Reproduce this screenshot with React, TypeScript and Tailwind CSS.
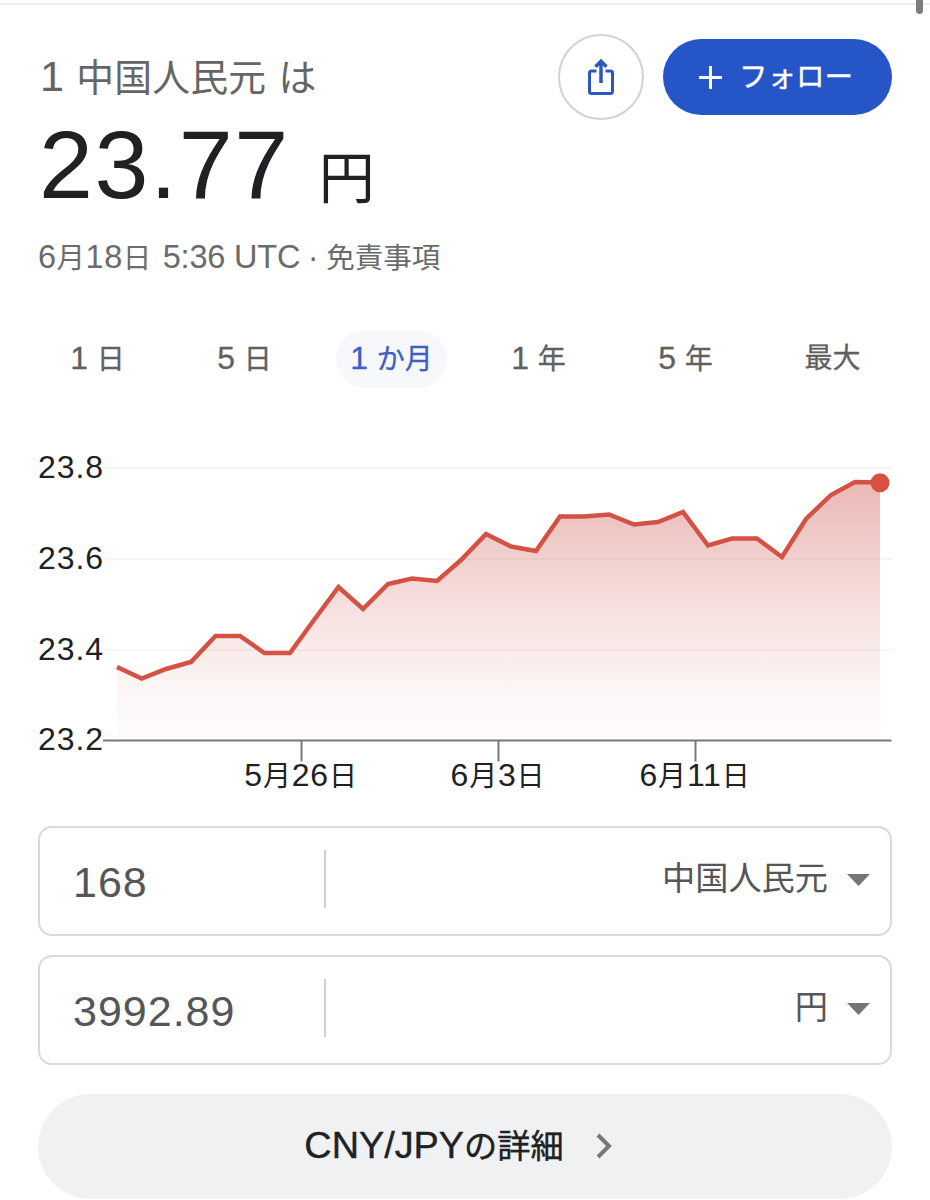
import React from 'react';

const RANGES = ['1 日', '5 日', '1 か月', '1 年', '5 年', '最大'];

const Y_LABELS = [
  { text: '23.8', y: 27.5 },
  { text: '23.6', y: 118.5 },
  { text: '23.4', y: 209.5 },
  { text: '23.2', y: 300 },
];

const X_LABELS = [
  { text: '5月26日', x: 263.5 },
  { text: '6月3日', x: 460.5 },
  { text: '6月11日', x: 657.5 },
];

const POINTS: [number, number][] = [
  [79, 227], [103.7, 238.5], [128, 229], [153, 222], [177.5, 196], [202, 196], [226.5, 213], [252, 213],
  [276, 180], [300.5, 147], [325, 169], [350, 144], [374, 138.5], [399, 141], [423, 120], [448, 94],
  [473, 106.5], [498, 111], [522, 76.5], [546, 76.5], [571, 74.5], [596, 84.5], [620, 82], [645, 72],
  [670, 105.5], [694, 98.5], [719, 98.5], [744, 117], [768, 79], [793, 55], [817, 42], [842, 42.5],
];

const LINE = POINTS.map(([x, y]) => `${x},${y}`).join(' ');

// Latin runs are set a little larger than the kanji and kana next to them
const Mixed: React.FC<{ text: string }> = ({ text }) => (
  <>
    {text.split(/([\x20-\x7e]+)/).filter(Boolean).map((part, i) => (
      <span key={i} className={/^[\x20-\x7e]/.test(part) ? 'text-[1.14em]' : ''}>{part}</span>
    ))}
  </>
);

const Chart: React.FC = () => (
  <svg viewBox="0 0 854 360" className="block h-[360px] w-[854px] overflow-visible">
    <defs>
      <linearGradient id="area" x1="0" y1="42" x2="0" y2="300" gradientUnits="userSpaceOnUse">
        <stop offset="0" stopColor="#c9443c" stopOpacity="0.38" />
        <stop offset="0.5" stopColor="#c9443c" stopOpacity="0.16" />
        <stop offset="0.8" stopColor="#c9443c" stopOpacity="0.05" />
        <stop offset="1" stopColor="#c9443c" stopOpacity="0.015" />
      </linearGradient>
    </defs>
    {Y_LABELS.slice(0, 3).map((label) => (
      <line key={label.text} x1="66" x2="854" y1={label.y + 0.5} y2={label.y + 0.5} stroke="#f6f6f6" strokeWidth="2" />
    ))}
    <polygon points={`79,300 ${LINE} 842,300`} fill="url(#area)" />
    <line x1="65" x2="853.5" y1="300.5" y2="300.5" stroke="#75797c" strokeWidth="2" />
    <polyline points={LINE} fill="none" stroke="#d35244" strokeWidth="4.5" />
    <circle cx="842" cy="42.7" r="9.5" fill="#d94f40" />
    {Y_LABELS.map((label) => (
      <text key={label.text} x="0" y={label.y + 10} fontSize="32" textLength="65" fill="#202124">{label.text}</text>
    ))}
    {X_LABELS.map((label) => (
      <g key={label.text}>
        <line x1={label.x} x2={label.x} y1="301" y2="321.5" stroke="#75797c" strokeWidth="2" />
        <text x={label.x - 0.5} y="345.5" fontSize="28" letterSpacing="0.8" textAnchor="middle" fill="#202124">
          {label.text.split(/(\d+)/).filter(Boolean).map((part, i) => (
            <tspan key={i} fontSize={/\d/.test(part) ? 32 : 28}>{part}</tspan>
          ))}
        </text>
      </g>
    ))}
  </svg>
);

const CurrencyField: React.FC<{ amount: string; currency: string }> = ({ amount, currency }) => (
  <div className="flex h-[110px] items-center rounded-[14px] border-2 border-[#d9dadd] pr-[20px] pl-[33px] text-[#555658]">
    <span className="w-[251px] pt-px text-[43px] leading-[48px] tracking-[1px]">{amount}</span>
    <div className="mb-[5px] h-[58px] w-[2px] bg-[#cfcfd1]"></div>
    <span className="mb-[5px] flex-grow text-right text-[33.2px] leading-[48px]">{currency}</span>
    <svg viewBox="0 0 23 12" className="mb-[2px] ml-[19px] h-[12px] w-[23px]">
      <path d="M0 0h23L11.5 12z" fill="#757575" />
    </svg>
  </div>
);

const App: React.FC = () => {
  return (
    <div className="relative flex h-[1200px] w-[930px] flex-col overflow-hidden bg-white pt-[3px] font-['Liberation_Sans','Noto_Sans_CJK_JP',sans-serif] text-[#202124]">
      <div className="h-[2px] shrink-0 bg-[#ebebeb]"></div>
      <div className="absolute -top-2 right-[7px] h-[22px] w-[7px] rounded-full bg-[#7d7d7d]"></div>

      <main className="flex flex-col px-[38px]">
        <header className="flex h-[113px] items-start pt-[29px]">
          <h1 className="flex-grow pt-[14px] pl-[2px] text-[37.8px] leading-[56px] tracking-[0.2px] whitespace-pre text-[#646567]">
            <Mixed text="1 中国人民元 は" />
          </h1>
          <button className="mr-[19px] flex size-[86px] items-center justify-center rounded-full border-2 border-[#d2d2d2]">
            <svg viewBox="0 0 26 36" className="h-[36px] w-[26px]" fill="none" stroke="#2c57bd" strokeWidth="3">
              <path d="M8.5 12h-5a2 2 0 0 0-2 2v18.5a2 2 0 0 0 2 2h19a2 2 0 0 0 2-2V14a2 2 0 0 0-2-2h-5" />
              <path d="M13 24V3M7.5 7.7L13 2.2l5.5 5.5" strokeWidth="3.5" />
            </svg>
          </button>
          <button className="mt-[5px] flex h-[76px] w-[229px] items-center rounded-full bg-[#2655c8] pl-[36px] text-white">
            <svg viewBox="0 0 23 23" className="h-[23px] w-[23px]" stroke="#fff" strokeWidth="3">
              <path d="M11.5 0v23M0 11.5h23" />
            </svg>
            <span className="ml-[17px] text-[28.5px] leading-[40px] [-webkit-text-stroke:0.4px]">フォロー</span>
          </button>
        </header>

        <div className="flex h-[112px] items-baseline pl-px">
          <span className="text-[97px] leading-[94px] tracking-[1.6px]">23.77</span>
          <span className="ml-[29px] text-[56px] leading-[94px]">円</span>
        </div>

        <p className="flex h-[100px] items-baseline pt-[5px] text-[28.5px] leading-[44px] text-[#6a6b6d]">
          <span className="tracking-[0.5px]"><Mixed text="6月18日" /></span>
          <span className="ml-[11px] text-[1.14em] tracking-[-0.2px]">5:36 UTC</span>
          <span className="w-[26px] text-center text-[1.14em]">·</span>
          <span>免責事項</span>
        </p>

        <nav className="-mx-[14px] grid h-[110px] grid-cols-6 items-start justify-items-center">
          {RANGES.map((range) => (
            <button
              key={range}
              className={`h-[58px] rounded-full px-[14px] text-[28px] leading-[54px] whitespace-pre [-webkit-text-stroke:0.3px] ${
                range === '1 か月' ? 'bg-[#f6f8fb] text-[#3d60c2]' : 'text-[#5f6062]'
              }`}
            >
              <Mixed text={range} />
            </button>
          ))}
        </nav>

        <Chart />

        <div className="mt-[26px] flex flex-col gap-[19px]">
          <CurrencyField amount="168" currency="中国人民元" />
          <CurrencyField amount="3992.89" currency="円" />
        </div>

        <button className="mt-[29px] flex h-[105px] items-center justify-center rounded-full bg-[#f0f1f3] pr-[14px] text-[33.2px] whitespace-pre">
          <span className="mb-[2px] leading-[60px] [-webkit-text-stroke:0.4px]"><Mixed text="CNY/JPYの詳細" /></span>
          <svg viewBox="0 0 16 26" className="mb-px ml-[32px] h-[26px] w-[16px]" fill="none" stroke="#757779" strokeWidth="4">
            <path d="M2 2l11 11L2 24" />
          </svg>
        </button>
      </main>
    </div>
  );
};

export default App;
